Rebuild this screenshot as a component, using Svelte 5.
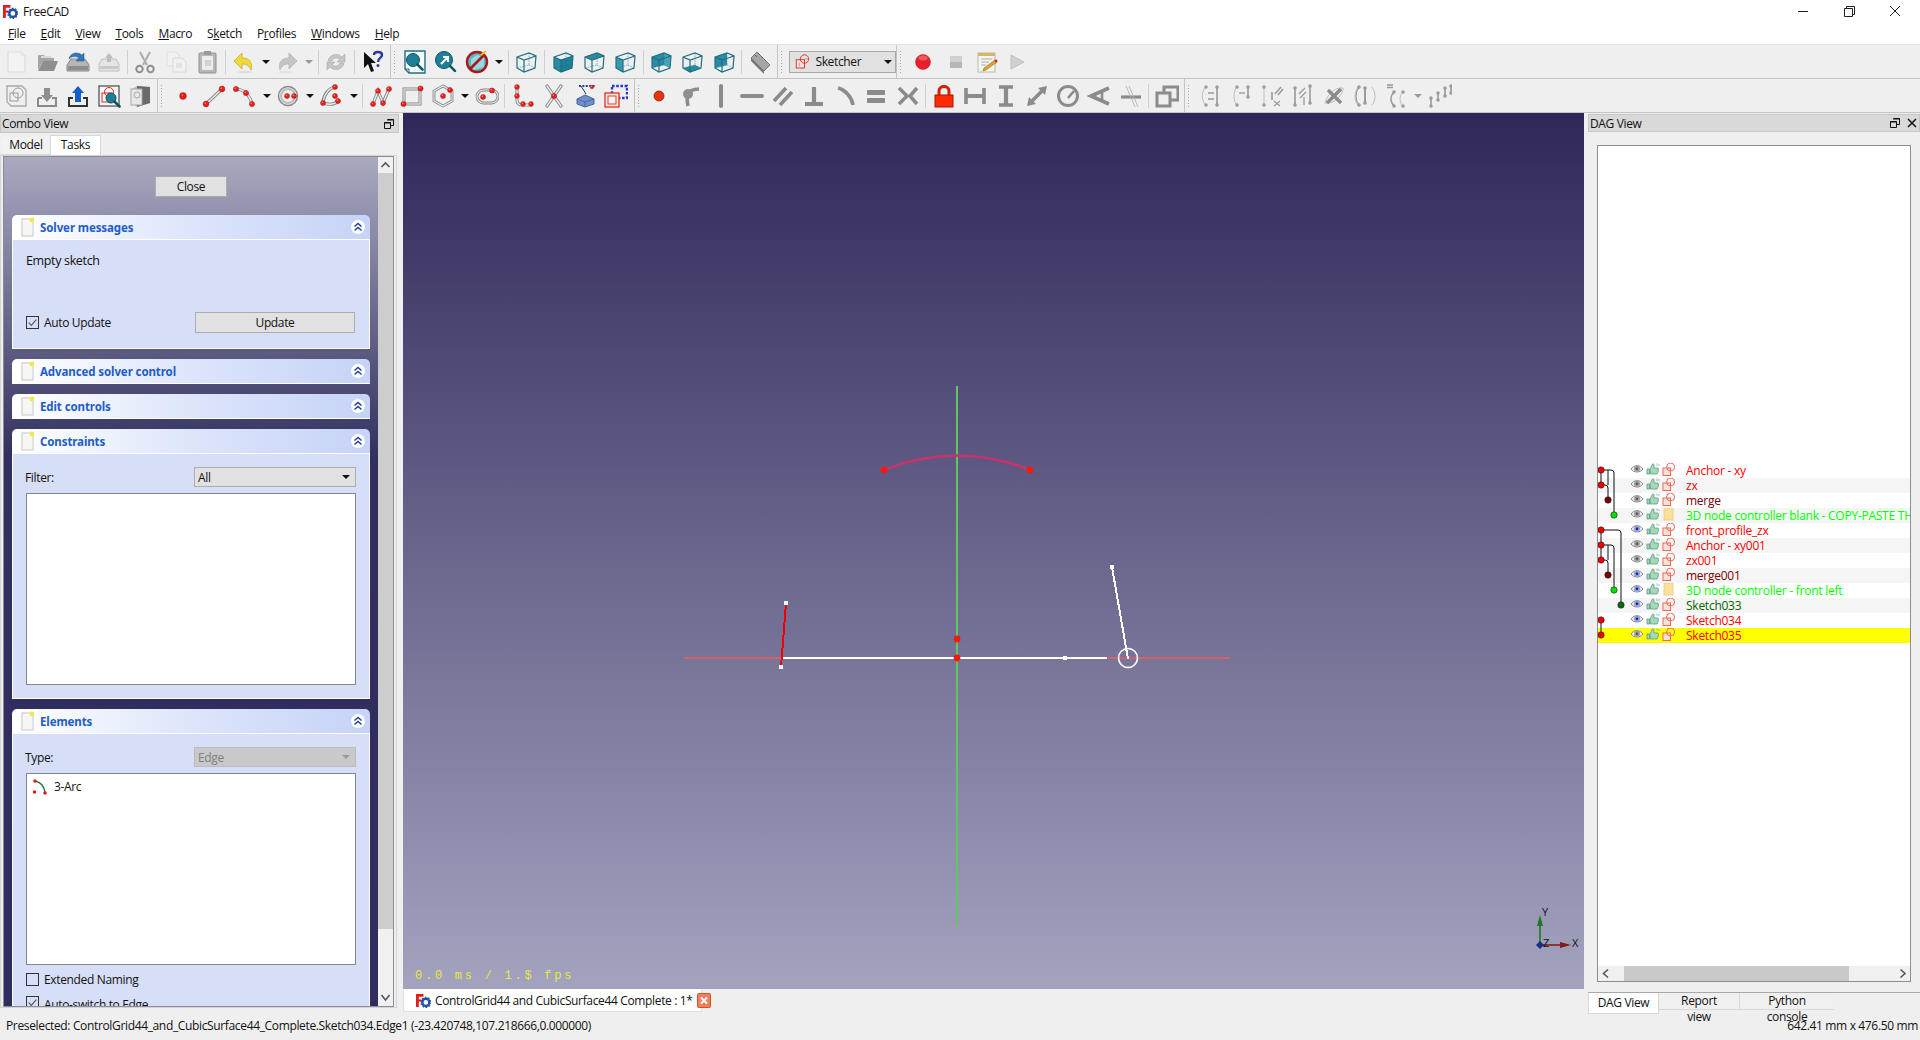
<script>
  const R = (x, y, r = 2.5) => `<circle cx="${x}" cy="${y}" r="${r}" fill="#e8201c" stroke="#a81410" stroke-width=".5"/><circle cx="${x - .7}" cy="${y - .8}" r=".7" fill="#ff9a90"/>`;
  const L = (d) => `<path d="${d}" fill="none" stroke="#858585" stroke-width="3.2" stroke-linecap="round"/><path d="${d}" fill="none" stroke="#ececec" stroke-width="1.4" stroke-linecap="round"/>`;
  const G = (d, w = 3.4) => `<path d="${d}" fill="none" stroke="#8b8b8b" stroke-width="${w}"/>`;
  const N = (x, y) => `<circle cx="${x}" cy="${y}" r="1.5" fill="#a0a0a0" stroke="#8a8a8a" stroke-width=".4"/>`;
  const T = (d, w = 1) => `<path d="${d}" fill="none" stroke="#bdbdbd" stroke-width="${w}"/>`;
  const D = (d, w = 1.3) => `<path d="${d}" fill="none" stroke="#9a9a9a" stroke-width="${w}"/>`;
  const cube = (fills = '') => `${fills}<path d="M3 7L15 3L22 6L21 18L10 22L3 18ZM3 7L10 10L22 6M10 10V22" fill="none" stroke="#1f6f82" stroke-width="1.2"/><path d="M15 3V15L3 18M15 15L21 18" fill="none" stroke="#1f6f82" stroke-width=".5" stroke-dasharray="1.5 1"/>`;
  const F = (p, c = '#2b8ba3') => `<polygon points="${p}" fill="${c}"/>`;
  const mag = (x, y, r, c = '#1f7f96') => `<circle cx="${x}" cy="${y}" r="${r}" fill="${c}" stroke="#0f5566" stroke-width="1"/><path d="M${x + r * .7} ${y + r * .7}L${x + r * .7 + 5} ${y + r * .7 + 5}" stroke="#0f5566" stroke-width="2.6" stroke-linecap="round"/>`;
  const sk = `<rect x="3" y="9" width="11" height="11" fill="#fbe4e0" stroke="#e02a1c" stroke-width="1.2"/><circle cx="14" cy="8" r="5.6" fill="none" stroke="#e02a1c" stroke-width="1.2"/><path d="M14 8h5M7 13v5" stroke="#777" stroke-width=".8"/>`;

  const icons = {
    new: `<path d="M4 2H17L21 6V22H4Z" fill="#f3f3f3" stroke="#dcdcdc" stroke-width="1.2"/><circle cx="18" cy="5" r="1.5" fill="#e6e6e6"/>`,
    open: `<path d="M3 20V5H9L11 8H19V11H8L3 20Z" fill="#a5a5a5"/><path d="M3 21L8 11H23L19 21Z" fill="#8f8f8f"/><path d="M6 6H16V8H6Z" fill="#dadada"/>`,
    save: `<path d="M1 15L5 9H19L23 15V21H1Z" fill="#b5b5b5" stroke="#8a8a8a"/><rect x="2" y="16" width="20" height="4" fill="#8c8c8c"/><path d="M3 9C4 3 11 1 16 5L18 3V11H10L13 8C10 6 6 6 3 9Z" fill="#2f78b8" stroke="#1c5a92" stroke-width=".5"/>`,
    saveas: `<path d="M2 14L5 9H19L22 14V21H2Z" fill="#e4e4e4" stroke="#c0c0c0"/><rect x="3" y="16" width="18" height="3" fill="#c8c8c8"/><path d="M12 3L16 8H14V12H10V8H8Z" fill="#bdbdbd"/>`,
    cut: `<path d="M7 2L14 15M17 2L10 15" stroke="#b0b0b0" stroke-width="2.2" fill="none"/><circle cx="6.5" cy="19" r="3.2" fill="none" stroke="#8f8f8f" stroke-width="2"/><circle cx="17.5" cy="19" r="3.2" fill="none" stroke="#8f8f8f" stroke-width="2"/>`,
    copy: `<path d="M3 2H12L15 5V16H3Z" fill="#f2f2f2" stroke="#dedede"/><path d="M9 8H18L22 12V22H9Z" fill="#f2f2f2" stroke="#d8d8d8"/><rect x="12" y="13" width="6" height="5" fill="#e2e2e2"/>`,
    paste: `<rect x="4" y="3" width="17" height="20" rx="1" fill="#b8b8b8" stroke="#8f8f8f"/><rect x="7" y="6" width="11" height="14" fill="#ececec"/><rect x="9" y="1" width="7" height="4" fill="#999"/><rect x="10" y="10" width="6" height="6" fill="#d2d2d2"/>`,
    undo: `<path d="M2 11L10 3V8C18 8 21 13 19 20C17 15 14 14 10 14V19Z" fill="#f0d838" stroke="#c8a818" stroke-width=".7"/><ellipse cx="13" cy="22" rx="8" ry="1.2" fill="#ddd"/>`,
    redo: `<path d="M22 11L14 3V8C6 8 3 13 5 20C7 15 10 14 14 14V19Z" fill="#c4c4c4" stroke="#b0b0b0" stroke-width=".7"/><ellipse cx="11" cy="22" rx="8" ry="1.2" fill="#e2e2e2"/>`,
    refresh: `<path d="M4 11C5 5 13 2 18 7L21 4V12H13L16 9C13 7 9 8 8 11Z" fill="#c6c6c6" stroke="#aaa" stroke-width=".6"/><path d="M20 13C19 19 11 22 6 17L3 20V12H11L8 15C11 17 15 16 16 13Z" fill="#c6c6c6" stroke="#aaa" stroke-width=".6"/>`,
    help: `<path d="M3 2L3 18L7 14L10 22L13 21L10 13H15Z" fill="#111"/><path d="M13 5C13 1 21 1 21 5C21 8 17 8 17 12" fill="none" stroke="#2a3a9a" stroke-width="2.4"/><circle cx="17" cy="15.5" r="1.5" fill="#2a3a9a"/>`,
    fitall: `<path d="M2 1H22V23H6L2 19Z" fill="#f8fbfc" stroke="#1f6f82" stroke-width="1.4"/><path d="M2 19H6V23" fill="none" stroke="#1f6f82"/>${mag(10, 10, 6.5)}`,
    fitsel: `${mag(10, 10, 8.5)}<path d="M7 14L13 8M9 7H14V12" fill="none" stroke="#fff" stroke-width="2"/>`,
    draw: `<circle cx="12" cy="12" r="10" fill="#58b8c8"/><polygon points="6,9 12,5 19,7 19,17 9,20 6,16" fill="#9ad8e0"/><circle cx="12" cy="12" r="10" fill="none" stroke="#a81818" stroke-width="2.4"/><path d="M5 19L19 5" stroke="#a81818" stroke-width="2.6"/><path d="M16 5L21 1" stroke="#e8c828" stroke-width="2"/>`,
    iso: cube(),
    front: cube(F('3,7 10,10 10,22 3,18') + F('10,10 22,6 21,18 10,22', '#1f7f98')),
    top: cube(F('3,7 15,3 22,6 10,10')),
    right: cube(F('3,7 10,10 10,22 3,18', '#3a9ab2')),
    rear: cube(F('3,7 15,3 15,15 3,18') + F('15,3 22,6 21,18 15,15', '#44a6bc')),
    bottom: cube(F('3,18 15,15 21,18 10,22')),
    left: cube(F('3,7 15,3 15,15 3,18')),
    measure: `<path d="M3 8L9 2L22 15L16 21Z" fill="#a6a6a6" stroke="#7a7a7a"/><path d="M7 5L9 7M10 3L12 5M13 6L15 8M16 9L18 11" stroke="#555" stroke-width=".8"/><path d="M3 8V11L16 24V21" fill="#777"/>`,
    rec: `<circle cx="12" cy="12" r="7.5" fill="#e8202c" stroke="#c01820" stroke-width=".5"/><ellipse cx="12" cy="8" rx="4.5" ry="2.5" fill="#f47078" opacity=".7"/>`,
    stop: `<rect x="7" y="6" width="12" height="12" fill="#cfcfcf"/><rect x="7" y="12" width="12" height="6" fill="#b5b5b5"/>`,
    macro: `<rect x="4" y="3" width="17" height="19" fill="#f6f6f0" stroke="#b8b8b0"/><path d="M4 3H21V6H4Z" fill="#d2b860"/><path d="M7 9H18M7 12H15M7 15H12" stroke="#aaa"/><path d="M10 18L21 10L23 12L12 20L9 21Z" fill="#e8a030" stroke="#8a5a18" stroke-width=".5"/><circle cx="22" cy="11" r="1.4" fill="#e02020"/>`,
    play: `<path d="M6 5L19 12L6 19Z" fill="#d0d0d0" stroke="#bdbdbd"/>`,
    psk: `<path d="M3 2H18L22 6V22H7L3 18Z" fill="#efefef" stroke="#a8a8a8" stroke-width="1.3"/><circle cx="14" cy="9" r="5" fill="none" stroke="#9a9a9a"/><rect x="6" y="9" width="8" height="8" fill="none" stroke="#9a9a9a"/>`,
    down: `<path d="M3 14V22H21V14H17" fill="none" stroke="#8a8a8a" stroke-width="2"/><path d="M3 14H7" stroke="#8a8a8a" stroke-width="2"/><path d="M9 4H15V11H18L12 18L6 11H9Z" fill="#8f8f8f"/>`,
    up: `<path d="M7 14H3V22H21V14H17" fill="none" stroke="#333" stroke-width="2"/><path d="M9 18H15V9H18L12 2L6 9H9Z" fill="#1460c8"/>`,
    vsk: `<rect x="2" y="2" width="20" height="20" fill="#f6f6f6" stroke="#555" stroke-width="1.3"/><rect x="5" y="9" width="9" height="9" fill="none" stroke="#e02a1c"/><circle cx="12" cy="8" r="4.5" fill="none" stroke="#e02a1c"/>${mag(14, 14, 5)}`,
    box: `<polygon points="4,5 9,2 22,3 22,19 9,23 4,19" fill="#bdbdbd"/><polygon points="9,2 22,3 22,19 9,23" fill="#6a6a6a"/><rect x="3" y="5" width="11" height="16" fill="#e8e8e8" stroke="#a8a8a8"/><circle cx="9" cy="11" r="3" fill="none" stroke="#aaa"/>`,
    point: R(12, 12, 3.4),
    line: L('M4 20L20 5') + R(4, 20, 2.9) + R(20, 5, 2.9),
    arc: L('M3 5C10 5 17 11 19 20') + R(3, 5, 2.6) + R(13, 9, 2.6) + R(19, 20, 2.6),
    circle: `<circle cx="12" cy="12" r="9.5" fill="none" stroke="#8a8a8a" stroke-width="1.5"/><circle cx="12" cy="12" r="7" fill="none" stroke="#bbb" stroke-width="2"/>` + R(11, 12) + R(18, 12),
    conic: L('M3 18C4 10 9 4 15 3') + L('M3 19C9 21 14 21 18 17') + R(15, 3) + R(3, 19) + R(15, 12) + R(18, 17),
    poly: L('M4 20L9 7L14 19L20 5') + R(4, 20) + R(9, 7) + R(14, 19) + R(20, 5),
    rect: `<rect x="4" y="5" width="16" height="15" fill="none" stroke="#858585" stroke-width="3"/><rect x="4" y="5" width="16" height="15" fill="none" stroke="#ececec" stroke-width="1.2"/>` + R(3.5, 20, 2.6) + R(20.5, 4.5, 2.6),
    hexa: `<polygon points="12,2 21,7 21,17 12,22 3,17 3,7" fill="none" stroke="#858585" stroke-width="2.8"/><polygon points="12,2 21,7 21,17 12,22 3,17 3,7" fill="none" stroke="#ececec" stroke-width="1.1"/>` + R(12, 12) + R(19, 6),
    slot: `<rect x="2" y="6" width="21" height="13" rx="6.5" fill="none" stroke="#858585" stroke-width="2.8"/><rect x="2" y="6" width="21" height="13" rx="6.5" fill="none" stroke="#ececec" stroke-width="1.1"/>` + R(8, 13) + R(17, 6.5),
    fillet: L('M6 3V16C6 19 8 21 11 21H20') + R(6, 3, 2.4) + R(6, 12, 2.4) + R(12, 20, 2.4) + R(20, 20, 2.4),
    trim: L('M5 2L19 22') + L('M19 2L5 22') + R(12, 12, 2.6),
    ext: `<path d="M4 15L12 11L21 15L21 20L12 23L4 20Z" fill="#6f90c8" stroke="#47659c"/><path d="M4 15L12 18L21 15M12 18V23" fill="none" stroke="#4c6ba6"/><path d="M13 10L8 2" stroke="#333"/><path d="M6 2H22" stroke="#2838a8" stroke-width="1.8" stroke-dasharray="2 1.4"/>` + R(19, 3, 1.8),
    carbon: `<rect x="8" y="2" width="15" height="12" fill="none" stroke="#2838c8" stroke-width="2.4" stroke-dasharray="2.6 1.6"/><rect x="1" y="9" width="14" height="14" fill="#fde8e4" stroke="#e83a2a" stroke-width="1.4"/><rect x="4" y="12" width="8" height="8" fill="#f4f4f4" stroke="#e83a2a" stroke-width="1"/>`,
    coin: `<circle cx="12" cy="12" r="5" fill="#e8340c" stroke="#802010" stroke-width=".8"/>`,
    pobj: `<path d="M10 22C8 13 9 5 21 5" fill="none" stroke="#8b8b8b" stroke-width="3.6"/><circle cx="10" cy="10" r="5" fill="#8f8f8f"/>`,
    vert: G('M12 2V22', 4).replace('/>', ' stroke-linecap="round"/>'),
    horiz: G('M2 12H22', 4).replace('/>', ' stroke-linecap="round"/>'),
    para: G('M3 17L15 4M9 21L21 8', 3.6),
    perp: G('M12 3V18M3 20H21', 4.2),
    tang: G('M5 4C13 6 19 14 20 21', 3.6) + G('M14 2L22 12M2 9C5 10 11 15 12 22', 0),
    equal: `<rect x="3" y="6" width="18" height="5" rx="1" fill="#8b8b8b"/><rect x="3" y="14" width="18" height="5" rx="1" fill="#8b8b8b"/>`,
    sym: G('M3 4L11 12L3 20', 3.6) + G('M21 4L14 12L21 20', 3.6),
    lock: `<path d="M7 12V7C7 1 17 1 17 7V12" fill="none" stroke="#d82000" stroke-width="3"/><rect x="3" y="11" width="18" height="12" fill="#ff2a00" stroke="#a01800"/>`,
    hdist: G('M3 4V20M21 4V20', 3.6) + G('M3 12H21', 4),
    vdist: G('M5 3H19M5 21H19', 3.6) + G('M12 3V21', 4.2),
    dist: `<path d="M4 20L20 4" stroke="#8b8b8b" stroke-width="3.6"/><path d="M2 22L4 13L11 20ZM22 2L20 11L13 4Z" fill="#8b8b8b"/>`,
    radius: `<circle cx="12" cy="12" r="9.5" fill="none" stroke="#8b8b8b" stroke-width="3"/><path d="M12 14L18 7" stroke="#8b8b8b" stroke-width="2.6"/>`,
    angle: G('M22 4L4 12L22 20', 3.6) + G('M15 7V17', 2.6),
    refr: G('M2 13H22', 3.2) + `<path d="M7 2L16 23M10 2L19 23" stroke="#b4b4b4" stroke-width=".9"/>`,
    toggle: `<rect x="9" y="3" width="14" height="13" fill="none" stroke="#8b8b8b" stroke-width="3"/><rect x="2" y="9" width="13" height="13" fill="#efefef" stroke="#8b8b8b" stroke-width="3"/>`,
    s1: T('M8 3C3 7 3 17 8 21') + D('M19 3V21', 1.6) + D('M10 9H16M10 15H16') + N(8, 3) + N(8, 21) + N(19, 3) + N(19, 21),
    s2: T('M8 3C4 7 4 17 8 21') + D('M19 3V13', 1.6) + D('M10 9H16') + N(8, 3) + N(8, 21) + N(19, 3) + N(19, 13),
    s3: T('M4 3V21') + D('M12 8V16', 1.6) + D('M15 10L21 3M18 11L23 5', 1.5) + D('M14 17L20 22M20 17L14 22', 1.2) + N(4, 3) + N(4, 21),
    s4: D('M4 4V21', 1.6) + D('M19 2V20', 1.6) + D('M8 10L14 4M9 14L15 8', 1.4) + D('M13 13V21') + N(4, 4) + N(4, 21) + N(19, 2) + N(19, 19),
    s5: T('M3 19C6 8 15 3 21 4L21 6C18 15 10 20 3 19Z') + `<path d="M5 19L19 5M6 6L19 19" stroke="#8b8b8b" stroke-width="3.4"/>`,
    s6: T('M5 3C1 9 1 16 5 21') + T('M19 3C23 9 23 16 19 21') + D('M12 5V18', 2) + D('M6 3C2 9 2 16 6 21', 1.2) + N(6, 3) + N(6, 21) + N(12, 4) + N(12, 19),
    s7: `<path d="M3 1H9M3 3.5H9" stroke="#999" stroke-width="1.4"/>` + D('M10 8C6 12 6 18 10 22', 1.5) + T('M19 8C15 12 15 18 19 22') + N(10, 8) + N(10, 22) + N(19, 8) + N(19, 22),
    s8: D('M3 14V22M10 9V16M17 4V12M23 2V9', 1.6) + N(3, 14) + N(3, 22) + N(10, 9) + N(10, 16) + N(17, 4) + N(17, 12) + N(23, 2) + N(23, 9)
  };

  const row1 = [
    { items: ['new', 'open', 'save', 'saveas', '|', 'cut', 'copy', 'paste', '|', 'undo', 'v', 'redo', 'w', '|', 'refresh', '|', 'help'] },
    { items: ['>', 'fitall', 'fitsel', 'draw', 'v', '|', 'iso', '|', 'front', 'top', 'right', '|', 'rear', 'bottom', 'left', '|', 'measure'] },
    { items: ['>', 'combo'], tight: true },
    { items: ['>>', 'rec', 'stop', 'macro', 'play'], last: true }
  ];
  const row2 = [
    { items: ['psk', 'down', 'up', 'vsk', 'box'] },
    { items: ['>', 'point', 'line', 'arc', 'v', 'circle', 'v', 'conic', 'v', '|', 'poly', 'rect', 'hexa', 'v', 'slot', '|', 'fillet', 'trim', 'ext', 'carbon'] },
    { items: ['>', 'coin', 'pobj', 'vert', 'horiz', 'para', 'perp', 'tang', 'equal', 'sym', '|', 'lock', 'hdist', 'vdist', 'dist', 'radius', 'angle', 'refr', '|', 'toggle'] },
    { items: ['>', 's1', 's2', 's3', 's4', 's5', 's6', 's7', 'w', 's8'], last: true }
  ];
  const menus = [['F', 'ile'], ['E', 'dit'], ['V', 'iew'], ['T', 'ools'], ['M', 'acro'], ['S', 'k', 'etch'], ['P', 'r', 'ofiles'], ['W', 'indows'], ['H', 'elp']];

  const dag = [
    ['Anchor - xy', 'red', 0, 's'],
    ['zx', 'red', 0, 's'],
    ['merge', 'maroon', 0, 's'],
    ['3D node controller blank - COPY-PASTE THIS FOR', 'lime', 0, 'f'],
    ['front_profile_zx', 'red', 1, 's'],
    ['Anchor - xy001', 'red', 0, 's'],
    ['zx001', 'red', 0, 's'],
    ['merge001', 'maroon', 1, 's'],
    ['3D node controller  - front left', 'lime', 1, 'f'],
    ['Sketch033', 'dgreen', 1, 's'],
    ['Sketch034', 'red', 1, 's'],
    ['Sketch035', 'red', 0, 's']
  ];
  const nodes = [
    [1601, 470, '#f00000'], [1601, 485, '#f00000'], [1608, 500, '#7a0000'], [1614, 515, '#00e000'],
    [1601, 530, '#f00000'], [1601, 545, '#f00000'], [1601, 560, '#f00000'], [1608, 575, '#7a0000'],
    [1614, 590, '#00e000'], [1621, 605, '#006a10'], [1601, 620, '#f00000'], [1601, 635, '#f00000']
  ];
</script>

{#snippet logo()}
  <svg class="logo" viewBox="0 0 16 16">
    <path d="M0 1H8V4H3V7H6V9H3V15H0Z" fill="#e0201c" />
    <circle cx="10.5" cy="10" r="3.8" fill="none" stroke="#2050a8" stroke-width="2.6" />
    <circle cx="10.5" cy="10" r="5.4" fill="none" stroke="#2050a8" stroke-width="1.2" stroke-dasharray="1.8 1.6" />
  </svg>
{/snippet}

{#snippet toolbar(bars)}
  <div class="tb">
    {#each bars as bar}
      <div class="bar" class:tight={bar.tight} class:last={bar.last}>
        {#each bar.items as it}
          {#if it === '|'}
            <span class="sep"></span>
          {:else if it === '>' || it === '>>'}
            <span class="grip" class:wide={it === '>>'}></span>
          {:else if it === 'v' || it === 'w'}
            <span class="drop"><span class="tri" class:grey={it === 'w'}></span></span>
          {:else if it === 'combo'}
            <div class="wb">
              <svg class="i20" viewBox="0 0 24 24">{@html sk}</svg>
              <span>Sketcher</span>
              <span class="tri end"></span>
            </div>
          {:else}
            <span class="btn"><svg class="i24" viewBox="0 0 24 24">{@html icons[it]}</svg></span>
          {/if}
        {/each}
      </div>
    {/each}
  </div>
{/snippet}

{#snippet chev()}
  <span class="chev">
    <svg viewBox="0 0 14 14"><path d="M3.5 6.5L7 3.5L10.5 6.5M3.5 10.5L7 7.5L10.5 10.5" fill="none" stroke="#1c3f9c" stroke-width="1.4" /></svg>
  </span>
{/snippet}

{#snippet head(label)}
  <div class="phead">
    <svg class="pageic" viewBox="0 0 14 20">
      <rect x="1" y="2" width="11" height="17" fill="#f6f6f2" stroke="#c8c8c8" />
      <circle cx="11" cy="3" r="2.4" fill="#f2e84c" />
    </svg>
    <span class="ptitle">{label}</span>
    {@render chev()}
  </div>
{/snippet}

<div class="app">
  <div class="title">
    {@render logo()}
    <span class="apptitle">FreeCAD</span>
    <div class="winbtns">
      <svg viewBox="0 0 46 22"><path d="M18 11.5H28" stroke="#222" /></svg>
      <svg viewBox="0 0 46 22"><path d="M18.5 8.5H26.5V16.5H18.5ZM20.5 8.5V6.5H28.5V14.5H26.5" fill="none" stroke="#222" /></svg>
      <svg viewBox="0 0 46 22"><path d="M18 6L28 16M28 6L18 16" stroke="#222" /></svg>
    </div>
  </div>
  <div class="menu">
    {#each menus as m}
      <span class="mi">
        {#if m.length === 3}{m[0]}<u>{m[1]}</u>{m[2]}{:else}<u>{m[0]}</u>{m[1]}{/if}
      </span>
    {/each}
  </div>
  {@render toolbar(row1)}
  {@render toolbar(row2)}

  <div class="main">
    <aside class="left">
      <div class="dtitle">
        <span>Combo View</span>
        <svg class="float" viewBox="0 0 10 10"><path d="M3.5 .5H9.5V6.5H7M.5 3.5H6.5V9.5H.5ZM.5 3.5" fill="none" stroke="#111" /><path d="M3 1H10M0 4H7" stroke="#111" /></svg>
      </div>
      <div class="ltabs">
        <span class="ltab">Model</span>
        <span class="ltab on">Tasks</span>
      </div>
      <div class="frame">
        <div class="scroll">
          <div class="tasks">
            <button class="qbtn close">Close</button>

            <section class="panel solver">
              {@render head('Solver messages')}
              <div class="pbody">
                <div class="msg">Empty sketch</div>
                <div class="autorow">
                  <span class="cb on"><svg viewBox="0 0 13 13"><path d="M2 6.5L5 10L11 3" fill="none" stroke="#555" stroke-width="1.3" /></svg></span>
                  <span class="cbl">Auto Update</span>
                  <button class="qbtn update">Update</button>
                </div>
              </div>
            </section>

            <section class="panel">{@render head('Advanced solver control')}</section>
            <section class="panel">{@render head('Edit controls')}</section>

            <section class="panel cons">
              {@render head('Constraints')}
              <div class="pbody">
                <div class="frow">
                  <span>Filter:</span>
                  <div class="select"><span>All</span><span class="tri"></span></div>
                </div>
                <div class="listbox l1"></div>
              </div>
            </section>

            <section class="panel elems">
              {@render head('Elements')}
              <div class="pbody">
                <div class="frow">
                  <span>Type:</span>
                  <div class="select dis"><span>Edge</span><span class="tri grey"></span></div>
                </div>
                <div class="listbox l2">
                  <div class="lrow">
                    <svg viewBox="0 0 16 16"><path d="M3 2C8 3 12 7 13 13" fill="none" stroke="#1c7a3c" stroke-width="1.4" /><circle cx="3" cy="2" r="1.8" fill="#d82020" /><circle cx="13" cy="14" r="1.8" fill="#d82020" /><circle cx="2.5" cy="13" r="1.8" fill="#d82020" /></svg>
                    <span>3-Arc</span>
                  </div>
                </div>
                <div class="chk1"><span class="cb"></span><span class="cbl">Extended Naming</span></div>
                <div class="chk2"><span class="cb on"><svg viewBox="0 0 13 13"><path d="M2 6.5L5 10L11 3" fill="none" stroke="#555" stroke-width="1.3" /></svg></span><span class="cbl">Auto-switch to Edge</span></div>
              </div>
            </section>
          </div>
          <div class="vscroll">
            <svg class="arr" viewBox="0 0 15 16"><path d="M3.5 10L7.5 6L11.5 10" fill="none" stroke="#555" stroke-width="1.6" /></svg>
            <div class="vthumb"></div>
            <div class="vrest"></div>
            <svg class="arr" viewBox="0 0 15 16"><path d="M3.5 5L7.5 10L11.5 5" fill="none" stroke="#555" stroke-width="1.6" /></svg>
          </div>
        </div>
      </div>
    </aside>

    <div class="center">
      <div class="viewer">
        <svg class="scene" viewBox="403 112 1181 876">
          <g shape-rendering="crispEdges">
            <line x1="957" y1="385" x2="957" y2="925" stroke="#63c463" stroke-width="2" />
            <line x1="684" y1="657" x2="1230" y2="657" stroke="#d0626a" stroke-width="2" />
            <line x1="781" y1="657" x2="1107" y2="657" stroke="#fff" stroke-width="2" />
            <line x1="786" y1="602" x2="781" y2="666" stroke="#f00000" stroke-width="2" />
            <rect x="784" y="600" width="4" height="4" fill="#fff" />
            <rect x="779" y="664" width="4" height="4" fill="#fff" />
            <rect x="1063" y="655" width="4" height="4" fill="#fff" />
            <line x1="1112" y1="566" x2="1128" y2="658" stroke="#fff" stroke-width="2" />
            <rect x="1110" y="564" width="4" height="4" fill="#fff" />
          </g>
          <path d="M884 469Q957 440 1030 469" fill="none" stroke="#c8326e" stroke-width="2.6" />
          <circle cx="884" cy="469" r="3.4" fill="#f01c10" />
          <circle cx="1030" cy="469" r="3.4" fill="#f01c10" />
          <circle cx="957" cy="638" r="3.4" fill="#f01c10" />
          <circle cx="957" cy="657" r="3.4" fill="#f01c10" />
          <circle cx="1128" cy="657" r="9.5" fill="none" stroke="#fff" stroke-width="1.6" />
          <path d="M1540 944V920" stroke="#1c7a20" stroke-width="1.6" />
          <path d="M1540 944H1568" stroke="#801c1c" stroke-width="1.6" />
          <path d="M1537 925L1540 914L1543 925Z" fill="#1c7a20" />
          <path d="M1560 941L1571 944L1560 947Z" fill="#801c1c" />
          <path d="M1540 940L1544 944L1540 948L1536 944Z" fill="#1c2a8c" />
          <text x="1542" y="915" class="axis">Y</text>
          <text x="1543" y="946" class="axis">Z</text>
          <text x="1572" y="946" class="axis">X</text>
        </svg>
        <div class="fps">0.0 ms / 1.$ fps</div>
      </div>
      <div class="doctabs">
        <div class="doctab">
          {@render logo()}
          <span>ControlGrid44 and CubicSurface44 Complete : 1*</span>
          <svg class="x" viewBox="0 0 14 15"><rect x=".5" y=".5" width="13" height="14" rx="1" fill="#f0805c" stroke="#d8502c" /><path d="M4 4.5L10 10.5M10 4.5L4 10.5" stroke="#fff" stroke-width="2" /></svg>
        </div>
      </div>
    </div>

    <aside class="right">
      <div class="dtitle">
        <span>DAG View</span>
        <div class="dicons">
          <svg class="float" viewBox="0 0 10 10"><path d="M3.5 .5H9.5V6.5H7M.5 3.5H6.5V9.5H.5Z" fill="none" stroke="#111" /><path d="M3 1H10M0 4H7" stroke="#111" /></svg>
          <svg class="float" viewBox="0 0 10 10"><path d="M1 1L9 9M9 1L1 9" stroke="#111" stroke-width="1.5" /></svg>
        </div>
      </div>
      <div class="dagbox">
        <div class="dagarea">
          {#each dag as d, i}
            <div class="drow" class:alt={i % 2 === 1 && i !== 11} class:sel={i === 11}>
              <svg class="ic" viewBox="0 0 14 14">
                <path d="M1 7C4 2.5 10 2.5 13 7C10 11 4 11 1 7Z" fill="#e8e8e8" stroke="#8a8a8a" />
                <circle cx="7" cy="6.8" r="3" fill={d[2] ? '#8c9ce8' : '#a0a0a0'} />
                <circle cx="7" cy="6.8" r="1.2" fill={d[2] ? '#1c1c88' : '#555'} />
              </svg>
              <svg class="ic" viewBox="0 0 14 14">
                <path d="M1 7H3.5V12H1ZM4 7L6 3C6 1.5 8 1.5 8 3V6H12C13 7 12 11 11 12H4.5Z" fill="#a4d8b8" stroke="#5c9c80" stroke-width=".8" />
                <path d="M10 3H14M10 .8H12" stroke="#7ab098" stroke-width=".7" />
              </svg>
              <svg class="ic" viewBox="0 0 14 14">
                {#if d[3] === 'f'}
                  <rect x="2" y="1" width="9" height="12" fill="#fbe09a" stroke="#ecd28a" />
                {:else}
                  <rect x="1" y="6" width="7.5" height="7.5" fill="#fbe0d8" stroke="#ec6a58" />
                  <circle cx="8.6" cy="5" r="4" fill="none" stroke="#ec6a58" />
                {/if}
              </svg>
              <span class="dname {d[1]}">{d[0]}</span>
            </div>
          {/each}
          <svg class="graph" viewBox="1598 146 313 820">
            <g fill="none" stroke="#111" stroke-width="1">
              <path d="M1601 470H1611Q1614 470 1614 473V515" />
              <path d="M1601 485H1605Q1608 485 1608 488V500" />
              <path d="M1608 470V485" />
              <path d="M1601 470V485" />
              <path d="M1601 530H1618Q1621 530 1621 533V605" />
              <path d="M1601 545H1611Q1614 545 1614 548V590" />
              <path d="M1601 560H1605Q1608 560 1608 563V575" />
              <path d="M1608 545V560" />
              <path d="M1601 530V560" />
              <path d="M1601 620V635" />
            </g>
            {#each nodes as n}
              <circle cx={n[0]} cy={n[1]} r="3.2" fill={n[2]} stroke="#222" stroke-width=".6" />
            {/each}
          </svg>
        </div>
        <div class="hscroll">
          <svg class="harr" viewBox="0 0 15 15"><path d="M10 3.5L5.5 7.5L10 11.5" fill="none" stroke="#555" stroke-width="1.6" /></svg>
          <div class="hthumb"></div>
          <svg class="harr" viewBox="0 0 15 15"><path d="M5.5 3.5L10 7.5L5.5 11.5" fill="none" stroke="#555" stroke-width="1.6" /></svg>
        </div>
      </div>
      <div class="rtabs">
        <span class="rtab on">DAG View</span>
        <span class="rtab">Report view</span>
        <span class="rtab">Python console</span>
      </div>
    </aside>
  </div>

  <footer class="status">
    <span>Preselected: ControlGrid44_and_CubicSurface44_Complete.Sketch034.Edge1 (-23.420748,107.218666,0.000000)</span>
    <span>642.41 mm x 476.50 mm</span>
  </footer>
</div>

<style>
  :global(body) {
    margin: 0;
    background: #efefef;
  }
  .app {
    width: 1920px;
    height: 1040px;
    display: flex;
    flex-direction: column;
    overflow: hidden;
    font-family: "Open Sans", "Noto Sans", sans-serif;
    font-size: 12px;
    letter-spacing: -0.35px;
    color: #111;
    background: #efefef;
  }
  .title {
    height: 22px;
    background: #fff;
    display: flex;
    align-items: center;
    padding-left: 3px;
  }
  .logo {
    width: 15px;
    height: 15px;
    flex: none;
  }
  .apptitle {
    margin-left: 5px;
  }
  .winbtns {
    margin-left: auto;
    display: flex;
    margin-right: 2px;
  }
  .winbtns svg {
    width: 46px;
    height: 22px;
  }
  .menu {
    height: 22px;
    background: #fff;
    display: flex;
    align-items: center;
    padding-left: 8px;
    gap: 15px;
    border-bottom: 0;
  }
  .tb {
    height: 33px;
    display: flex;
    border-top: 1px solid #e4e4e4;
    border-bottom: 0;
    background: #efefef;
  }
  .tb + .tb {
    border-top: 1px solid #c4c4c4;
    border-bottom: 1px solid #c4c4c4;
    height: 33px;
  }
  .bar {
    display: flex;
    align-items: center;
    padding-right: 2px;
    border-right: 1px solid #c4c4c4;
    flex: none;
  }
  .bar.tight {
    padding-right: 0;
  }
  .bar.last {
    border-right: 0;
    flex: 1;
  }
  .grip {
    width: 8.5px;
    height: 24px;
    flex: none;
    position: relative;
    background-image: radial-gradient(circle, #a8a8a8 0.8px, transparent 1px);
    background-size: 3px 3px;
    background-repeat: repeat-y;
    background-position: 2px 0;
  }
  .grip.wide {
    width: 10.5px;
  }
  .btn {
    width: 31.1px;
    height: 24px;
    flex: none;
    display: flex;
    justify-content: center;
    align-items: center;
  }
  .i24 {
    width: 24px;
    height: 24px;
  }
  .i20 {
    width: 18px;
    height: 18px;
    margin-left: 4px;
    margin-right: 3px;
  }
  .sep {
    width: 5.3px;
    height: 24px;
    flex: none;
    background: linear-gradient(#cfcfcf, #cfcfcf) no-repeat center / 1px 100%;
  }
  .drop {
    width: 12.5px;
    height: 24px;
    flex: none;
    display: flex;
    align-items: center;
    justify-content: center;
  }
  .tri {
    display: inline-block;
    width: 0;
    height: 0;
    border-left: 4px solid transparent;
    border-right: 4px solid transparent;
    border-top: 4px solid #111;
    flex: none;
  }
  .tri.grey {
    border-top-color: #999;
  }
  .tri.end {
    margin-left: auto;
    margin-right: 3px;
  }
  .wb {
    width: 107px;
    height: 22px;
    margin-left: 2.5px;
    box-sizing: border-box;
    border: 1px solid #a8a8a8;
    background: #e1e1e1;
    display: flex;
    align-items: center;
    font-size: 12px;
  }
  .main {
    flex: 1;
    display: flex;
    min-height: 0;
  }
  .left {
    width: 403px;
    flex: none;
    display: flex;
    flex-direction: column;
  }
  .dtitle {
    margin: 1px 0 0;
    height: 18px;
    box-sizing: border-box;
    border: 1px solid #c6c6c6;
    background: #d9d9d9;
    display: flex;
    justify-content: space-between;
    align-items: center;
    padding: 0 4px 0 1px;
    flex: none;
  }
  .left .dtitle {
    width: 399px;
    height: 19px;
  }
  .float {
    width: 10px;
    height: 10px;
  }
  .ltabs {
    display: flex;
    align-items: flex-end;
    height: 22px;
    padding-left: 2px;
    box-sizing: border-box;
    flex: none;
  }
  .ltab {
    width: 48px;
    height: 17px;
    text-align: center;
    line-height: 16px;
    background: #f2f2f2;
    border-bottom: 1px solid #d8d8d8;
  }
  .ltab.on {
    width: 51px;
    height: 20px;
    background: #fff;
    line-height: 18px;
    border: 1px solid #d8d8d8;
    border-bottom: 0;
    box-sizing: border-box;
  }
  .frame {
    width: 397px;
    height: 853px;
    box-sizing: border-box;
    border: 1px solid #d4d4d4;
    padding: 0 2px 2px 0;
    margin-left: 0;
    flex: none;
  }
  .scroll {
    height: 851px;
    margin-left: 2px;
    box-sizing: border-box;
    border: 1px solid #8c8c98;
    border-bottom-width: 1px;
    display: flex;
  }
  .tasks {
    width: 374px;
    height: 849px;
    flex: none;
    overflow: hidden;
    box-sizing: border-box;
    padding: 19px 8px 0;
    display: flex;
    flex-direction: column;
    gap: 10px;
    background: linear-gradient(#a9a9c0 0, #32305f 300px, #2f2c5f 100%);
  }
  .qbtn {
    font: inherit;
    letter-spacing: inherit;
    color: #111;
    background: #e1e1e1;
    border: 1px solid #adadad;
    padding: 0;
    height: 21px;
    box-sizing: border-box;
  }
  .close {
    width: 72px;
    margin: 0 0 8px 143px;
    flex: none;
  }
  .panel {
    width: 358px;
    flex: none;
  }
  .phead {
    height: 25px;
    box-sizing: border-box;
    border-radius: 5px 5px 0 0;
    border-bottom: 1px solid #fff;
    background: linear-gradient(90deg, #ffffff 0, #dde5fb 50%, #c6d3f7 100%);
    display: flex;
    align-items: center;
    padding: 0 4px 0 9px;
  }
  .pageic {
    width: 14px;
    height: 20px;
    flex: none;
  }
  .ptitle {
    font-family: "Noto Sans", sans-serif;
    font-size: 11.5px;
    font-weight: 700;
    letter-spacing: -0.1px;
    color: #215dc6;
    margin-left: 5px;
  }
  .chev {
    width: 14px;
    height: 14px;
    margin-left: auto;
    border-radius: 50%;
    background: #fff;
    border: 1px solid #c9d4ee;
    display: flex;
  }
  .chev svg {
    width: 14px;
    height: 14px;
  }
  .pbody {
    background: #d6dff7;
    box-sizing: border-box;
    border: 1px solid #fff;
    border-top: 0;
    padding: 0 13px;
  }
  .solver .pbody {
    height: 109px;
    display: flex;
    flex-direction: column;
  }
  .msg {
    margin-top: 12px;
    font-size: 12.5px;
  }
  .autorow {
    margin-top: auto;
    margin-bottom: 15px;
    display: flex;
    align-items: center;
  }
  .cb {
    width: 13px;
    height: 13px;
    box-sizing: border-box;
    border: 1px solid #333;
    flex: none;
    display: flex;
  }
  .cb svg {
    width: 11px;
    height: 11px;
  }
  .cbl {
    margin-left: 5px;
  }
  .update {
    width: 160px;
    margin-left: auto;
    margin-right: 1px;
  }
  .frow {
    display: flex;
    align-items: center;
    justify-content: space-between;
    height: 20px;
    padding-top: 13px;
    margin-left: -1px;
  }
  .select {
    width: 162px;
    height: 20px;
    box-sizing: border-box;
    border: 1px solid #adadad;
    background: #e1e1e1;
    display: flex;
    align-items: center;
    justify-content: space-between;
    padding: 0 5px 0 3px;
  }
  .select.dis {
    background: #c9c9c9;
    color: #808080;
    border-color: #bcbcbc;
  }
  .listbox {
    width: 330px;
    background: #fff;
    box-sizing: border-box;
    border: 1px solid #828790;
    margin-top: 6px;
  }
  .l1 {
    height: 192px;
    margin-bottom: 13px;
  }
  .l2 {
    height: 192px;
    padding: 4px 5px;
  }
  .lrow {
    display: flex;
    align-items: center;
    gap: 6px;
  }
  .lrow svg {
    width: 16px;
    height: 16px;
  }
  .chk1,
  .chk2 {
    display: flex;
    align-items: center;
    height: 13px;
    margin-top: 8px;
  }
  .chk2 {
    margin-top: 10px;
    height: 18px;
    align-items: flex-start;
  }
  .vscroll {
    width: 15px;
    margin-left: 0;
    display: flex;
    flex-direction: column;
    background: #f0f0f0;
    flex: none;
  }
  .arr {
    width: 15px;
    height: 16px;
    flex: none;
  }
  .vthumb {
    height: 756px;
    background: #cdcdcd;
    flex: none;
  }
  .vrest {
    flex: 1;
  }
  .center {
    flex: 1;
    display: flex;
    flex-direction: column;
    min-width: 0;
  }
  .viewer {
    height: 876px;
    position: relative;
    flex: none;
    background: linear-gradient(#2f2759, #a3a3bf);
  }
  .scene {
    position: absolute;
    inset: 0;
    width: 100%;
    height: 100%;
  }
  .axis {
    font-family: "Open Sans", sans-serif;
    font-size: 11px;
    fill: #111;
  }
  .fps {
    position: absolute;
    left: 12px;
    bottom: 6px;
    font-family: "Liberation Mono", monospace;
    font-size: 12px;
    letter-spacing: 2.75px;
    color: #e8e840;
  }
  .doctabs {
    height: 23px;
    flex: none;
  }
  .doctab {
    width: 299px;
    height: 23px;
    background: #fff;
    box-sizing: border-box;
    border: 1px solid #e0e0e0;
    border-top: 0;
    display: flex;
    align-items: center;
    padding-left: 12px;
  }
  .doctab span {
    margin-left: 4px;
    white-space: nowrap;
  }
  .x {
    width: 14px;
    height: 15px;
    margin-left: 4px;
    flex: none;
  }
  .right {
    width: 336px;
    flex: none;
    display: flex;
    flex-direction: column;
    padding-left: 4px;
    box-sizing: border-box;
  }
  .dicons {
    display: flex;
    gap: 7px;
    margin-right: -2px;
  }
  .dagbox {
    margin: 13px 9px 0;
    height: 837px;
    box-sizing: border-box;
    border: 1px solid #8c8c98;
    background: #fff;
    display: flex;
    flex-direction: column;
    flex: none;
  }
  .dagarea {
    position: relative;
    flex: 1;
    overflow: hidden;
    padding-top: 317px;
  }
  .drow {
    height: 15px;
    display: flex;
    align-items: center;
    padding-left: 32px;
    gap: 2px;
    white-space: nowrap;
    overflow: hidden;
  }
  .alt {
    background: #f5f5f5;
  }
  .sel {
    background: #ffff00;
  }
  .ic {
    width: 14px;
    height: 14px;
    flex: none;
    position: relative;
    top: -2px;
  }
  .dname {
    margin-left: 8px;
    letter-spacing: -0.25px;
  }
  .red {
    color: #ff0000;
  }
  .maroon {
    color: #800000;
  }
  .lime {
    color: #00ff00;
  }
  .dgreen {
    color: #006400;
  }
  .graph {
    position: absolute;
    left: 0;
    top: 0;
    width: 313px;
    height: 820px;
  }
  .hscroll {
    height: 15px;
    flex: none;
    background: #f0f0f0;
    display: flex;
    align-items: center;
  }
  .harr {
    width: 15px;
    height: 15px;
    flex: none;
  }
  .hthumb {
    width: 225px;
    height: 15px;
    background: #c9c9c9;
    margin: 0 auto 0 11px;
  }
  .rtabs {
    margin-top: 10px;
    height: 20px;
    display: flex;
    border-top: 1px solid #a8a8a8;
    align-items: flex-start;
    flex: none;
  }
  .rtab {
    height: 17px;
    line-height: 16px;
    padding: 0 10px;
    box-sizing: border-box;
    width: 81px;
    text-align: center;
    border-bottom: 1px solid #d8d8d8;
    border-right: 1px solid #d8d8d8;
    background: #f0f0f0;
  }
  .rtab:last-child {
    width: 94px;
    border-right: 0;
  }
  .rtab.on {
    width: 71px;
    height: 21px;
    padding: 2px 0 0;
    background: #fff;
    border: 1px solid #d8d8d8;
    border-top: 0;
  }
  .status {
    height: 29px;
    flex: none;
    display: flex;
    justify-content: space-between;
    align-items: center;
    padding: 0 2px 0 6px;
  }
</style>
